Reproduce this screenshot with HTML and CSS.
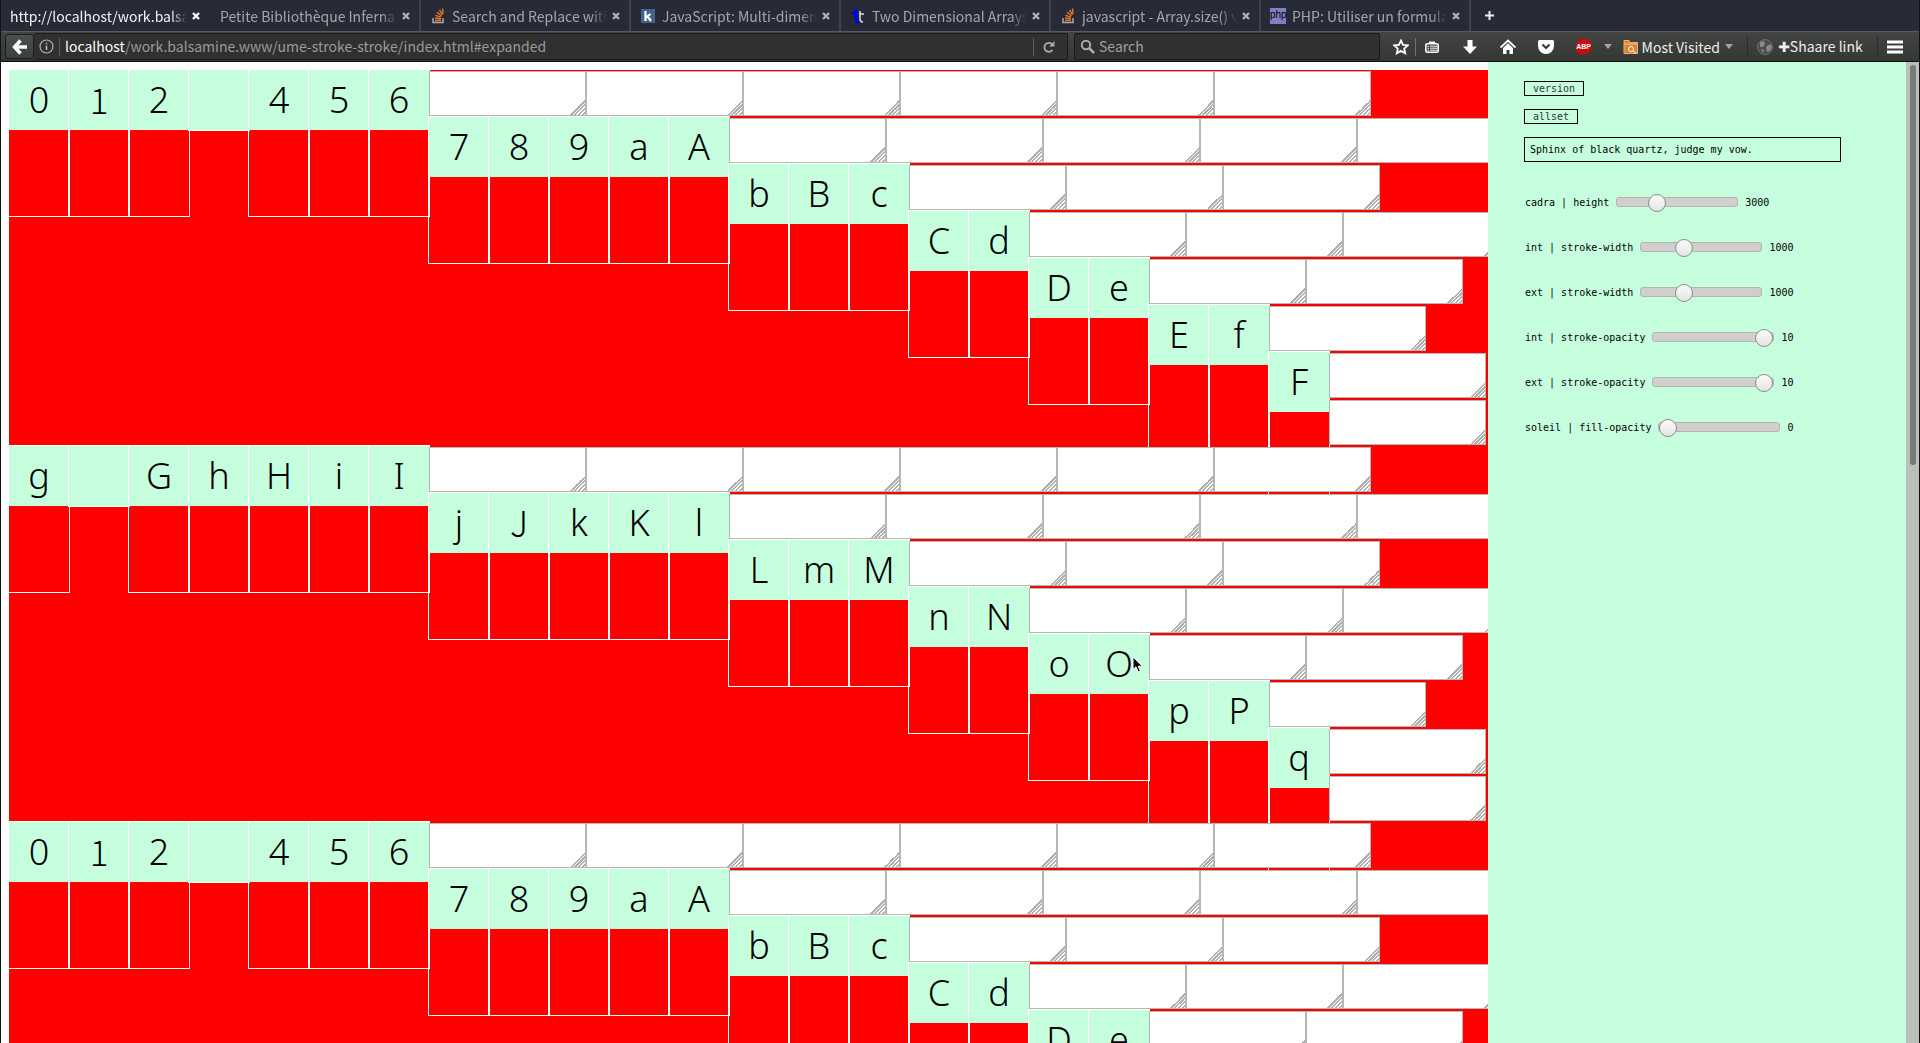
FILE: index.html
```html
<!DOCTYPE html>
<html lang="fr">
<head>
<meta charset="utf-8">
<title>ume-stroke-stroke</title>
<link rel="stylesheet" href="styles.css">
</head>
<body>
<nav class="tabs">
  <div class="tab active"><a href="#t1">http://localhost/work.balsam</a><button class="close" aria-label="Close tab"><svg width="8" height="8" viewBox="0 0 8 8"><path d="M1 1l6 6M7 1l-6 6"/></svg></button></div>
  <div class="tab"><a href="#t2">Petite Bibliothèque Infernal</a><button class="close" aria-label="Close tab"><svg width="8" height="8" viewBox="0 0 8 8"><path d="M1 1l6 6M7 1l-6 6"/></svg></button></div>
  <div class="tab"><svg class="fav" width="16" height="16" viewBox="0 0 16 16"><path d="M3 10v4.500h10V10" fill="none" stroke="#aaa" stroke-width="1.500"/><path d="M5 12.500h6M5 10l6 .8M5.500 7.300l5.500 1.800M7 4.300l4.500 3.400M9.500 2l3 4.600M12.500 .5l.6 5" stroke="#e87922" stroke-width="1.400"/></svg><a href="#t3">Search and Replace with</a><button class="close" aria-label="Close tab"><svg width="8" height="8" viewBox="0 0 8 8"><path d="M1 1l6 6M7 1l-6 6"/></svg></button></div>
  <div class="tab"><svg class="fav" width="16" height="16" viewBox="0 0 16 16"><rect x="1" y="1" width="14" height="14" fill="#45618f"/><path d="M5.500 3v10M10.500 6L6 9.500M7.500 8.500L11 13" stroke="#fff" stroke-width="2.200" fill="none"/></svg><a href="#t4">JavaScript: Multi-dimens</a><button class="close" aria-label="Close tab"><svg width="8" height="8" viewBox="0 0 8 8"><path d="M1 1l6 6M7 1l-6 6"/></svg></button></div>
  <div class="tab"><svg class="fav" width="16" height="16" viewBox="0 0 16 16"><path d="M6 1v10q0 3.500 3 3.500M2 5.500h6" stroke="#0000e0" stroke-width="3" fill="none"/><path d="M10 3v8q0 3 3 3M9 6h5" stroke="#ddd" stroke-width="1.500" fill="none"/></svg><a href="#t5">Two Dimensional Arrays</a><button class="close" aria-label="Close tab"><svg width="8" height="8" viewBox="0 0 8 8"><path d="M1 1l6 6M7 1l-6 6"/></svg></button></div>
  <div class="tab"><svg class="fav" width="16" height="16" viewBox="0 0 16 16"><path d="M3 10v4.500h10V10" fill="none" stroke="#aaa" stroke-width="1.500"/><path d="M5 12.500h6M5 10l6 .8M5.500 7.300l5.500 1.800M7 4.300l4.500 3.400M9.500 2l3 4.600M12.500 .5l.6 5" stroke="#e87922" stroke-width="1.400"/></svg><a href="#t6">javascript - Array.size() v</a><button class="close" aria-label="Close tab"><svg width="8" height="8" viewBox="0 0 8 8"><path d="M1 1l6 6M7 1l-6 6"/></svg></button></div>
  <div class="tab"><span class="fav php">php</span><a href="#t7">PHP: Utiliser un formula</a><button class="close" aria-label="Close tab"><svg width="8" height="8" viewBox="0 0 8 8"><path d="M1 1l6 6M7 1l-6 6"/></svg></button></div>
  <button class="newtab" aria-label="New tab"><svg width="9" height="9" viewBox="0 0 9 9"><path d="M4.500 0v9M0 4.500h9" stroke="#eee" stroke-width="2"/></svg></button>
</nav>

<header class="toolbar">
  <button class="back" aria-label="Back"><svg width="16" height="16" viewBox="0 0 16 16"><path d="M8.500 1.500L2.500 8l6 6.500M3 8h12" fill="none" stroke="#fff" stroke-width="3.400"/></svg></button>
  <div class="urlbar">
    <svg width="15" height="15" viewBox="0 0 15 15"><circle cx="7.500" cy="7.500" r="6.500" fill="none" stroke="#b5b5b5" stroke-width="1.200"/><path d="M7.500 6.500v4.500M7.500 3.800v1.500" stroke="#b5b5b5" stroke-width="1.600"/></svg>
    <span class="vline"></span>
    <p class="url"><b>localhost</b>/work.balsamine.www/ume-stroke-stroke/index.html#expanded</p>
    <span class="vline"></span>
    <button class="reload" aria-label="Reload"><svg width="12" height="12" viewBox="0 0 12 12"><path d="M9.500 9A4.500 4.500 0 1 1 9 3" fill="none" stroke="#a3abb3" stroke-width="1.800"/><path d="M11.500 0v5.500H6z" fill="#a3abb3"/></svg></button>
  </div>
  <div class="search">
    <svg width="15" height="15" viewBox="0 0 15 15"><circle cx="6" cy="6" r="4.200" fill="none" stroke="#aaa" stroke-width="2"/><path d="M9 9l5 5" stroke="#aaa" stroke-width="2.500"/></svg>
    <input type="text" placeholder="Search" aria-label="Search">
  </div>
  <div class="tools">
    <button aria-label="Bookmark"><svg width="16" height="16" viewBox="0 0 16 16"><path d="M8 1.500l2 4.400 4.800.5-3.600 3.200 1 4.700L8 11.900l-4.200 2.400 1-4.700L1.200 6.400 6 5.900z" fill="none" stroke="#fff" stroke-width="1.800"/></svg></button>
    <span class="split"></span>
    <button aria-label="Bookmarks list"><svg width="16" height="16" viewBox="0 0 16 16"><path d="M5 3.500h6" stroke="#fff" stroke-width="2"/><rect x="1.800" y="4.800" width="12.400" height="8.400" rx="1.500" fill="none" stroke="#fff" stroke-width="1.600"/><path d="M3.500 7.200h1.500M6 7.200h7M3.500 9.200h1.500M6 9.200h7M3.500 11.200h1.500M6 11.200h7" stroke="#fff"/></svg></button>
    <button aria-label="Downloads"><svg width="16" height="16" viewBox="0 0 16 16"><path d="M5.500 1h5v6.500H15L8 15 1 7.500h4.500z" fill="#fff"/></svg></button>
    <button aria-label="Home"><svg width="16" height="16" viewBox="0 0 16 16"><path d="M.5 8.500L8 1.500l7.500 7" fill="none" stroke="#fff" stroke-width="1.800"/><path d="M3 9l5-4.700L13 9v6H9.500v-4h-3v4H3z" fill="#fff"/></svg></button>
    <button aria-label="Pocket"><svg width="16" height="16" viewBox="0 0 16 16"><path d="M1.500 1h13Q16 1 16 2.500V7A8 8 0 0 1 0 7V2.500Q0 1 1.500 1z" fill="#fff"/><path d="M4.500 5.500L8 9l3.500-3.500" fill="none" stroke="#3a3c3a" stroke-width="2.200"/></svg></button>
    <button class="abp" aria-label="Adblock">ABP</button>
    <svg class="caret" width="8" height="5" viewBox="0 0 8 5"><path d="M0 0h8L4 5z" fill="#a5a5a5"/></svg>
    <a class="bm" href="#visited"><svg width="16" height="16" viewBox="0 0 16 16"><path d="M1 14.500v-13h5l1 2h7.500v11z" fill="#d9822f" stroke="#f3b26c"/><path d="M1 5h14" stroke="#f7c58e"/><circle cx="8" cy="10" r="2.500" fill="none" stroke="#fff"/><path d="M10 12l3 2" stroke="#fff"/></svg>Most Visited<svg width="8" height="5" viewBox="0 0 8 5"><path d="M0 0h8L4 5z" fill="#a5a5a5"/></svg></a>
    <span class="groove"></span>
    <a class="shaare" href="#shaare"><svg width="16" height="16" viewBox="0 0 16 16"><circle cx="8" cy="8" r="7.500" fill="#4d4e4d" stroke="#6d6e6d"/><path d="M3 3l4-1 1 3-2 3-3 0zM9 8l4-3 2 3-2 4-3 1zM4 10l3 1-1 3z" fill="#8a8b8a"/></svg><span><b>✚</b>Shaare link</span></a>
    <span class="groove"></span>
    <button aria-label="Menu"><svg width="16" height="16" viewBox="0 0 16 16"><path d="M0 3h16M0 8h16M0 13h16" stroke="#fff" stroke-width="3"/></svg></button>
  </div>
</header>

<main class="page">
  <div class="canvas">
    <div class="sheet">
      <section class="set">
        <div class="row s0"><i><b>0</b></i><i><b class="alt">1</b></i><i><b>2</b></i><i class="empty"><b></b></i><i><b>4</b></i><i><b>5</b></i><i><b>6</b></i><textarea aria-label="path"></textarea><textarea aria-label="path"></textarea><textarea aria-label="path"></textarea><textarea aria-label="path"></textarea><textarea aria-label="path"></textarea><textarea aria-label="path"></textarea></div>
        <div class="row s7"><i><b>7</b></i><i><b>8</b></i><i><b>9</b></i><i><b>a</b></i><i><b>A</b></i><textarea aria-label="path"></textarea><textarea aria-label="path"></textarea><textarea aria-label="path"></textarea><textarea aria-label="path"></textarea><textarea aria-label="path"></textarea></div>
        <div class="row s12"><i><b>b</b></i><i><b>B</b></i><i><b>c</b></i><textarea aria-label="path"></textarea><textarea aria-label="path"></textarea><textarea aria-label="path"></textarea></div>
        <div class="row s15"><i><b>C</b></i><i><b>d</b></i><textarea aria-label="path"></textarea><textarea aria-label="path"></textarea><textarea aria-label="path"></textarea></div>
        <div class="row s17"><i><b>D</b></i><i><b>e</b></i><textarea aria-label="path"></textarea><textarea aria-label="path"></textarea></div>
        <div class="row s19"><i><b>E</b></i><i><b>f</b></i><textarea aria-label="path"></textarea></div>
        <div class="row s21"><i><b>F</b></i><textarea aria-label="path"></textarea></div>
        <div class="row s22"><textarea aria-label="path"></textarea></div>
      </section>
      <section class="set">
        <div class="row s0"><i><b>g</b></i><i class="empty"><b></b></i><i><b>G</b></i><i><b>h</b></i><i><b>H</b></i><i><b>i</b></i><i><b>I</b></i><textarea aria-label="path"></textarea><textarea aria-label="path"></textarea><textarea aria-label="path"></textarea><textarea aria-label="path"></textarea><textarea aria-label="path"></textarea><textarea aria-label="path"></textarea></div>
        <div class="row s7"><i><b>j</b></i><i><b class="alt">J</b></i><i><b>k</b></i><i><b>K</b></i><i><b>l</b></i><textarea aria-label="path"></textarea><textarea aria-label="path"></textarea><textarea aria-label="path"></textarea><textarea aria-label="path"></textarea><textarea aria-label="path"></textarea></div>
        <div class="row s12"><i><b>L</b></i><i><b>m</b></i><i><b>M</b></i><textarea aria-label="path"></textarea><textarea aria-label="path"></textarea><textarea aria-label="path"></textarea></div>
        <div class="row s15"><i><b>n</b></i><i><b>N</b></i><textarea aria-label="path"></textarea><textarea aria-label="path"></textarea><textarea aria-label="path"></textarea></div>
        <div class="row s17"><i><b>o</b></i><i><b>O</b></i><textarea aria-label="path"></textarea><textarea aria-label="path"></textarea></div>
        <div class="row s19"><i><b>p</b></i><i><b>P</b></i><textarea aria-label="path"></textarea></div>
        <div class="row s21"><i><b>q</b></i><textarea aria-label="path"></textarea></div>
        <div class="row s22"><textarea aria-label="path"></textarea></div>
      </section>
      <section class="set">
        <div class="row s0"><i><b>0</b></i><i><b class="alt">1</b></i><i><b>2</b></i><i class="empty"><b></b></i><i><b>4</b></i><i><b>5</b></i><i><b>6</b></i><textarea aria-label="path"></textarea><textarea aria-label="path"></textarea><textarea aria-label="path"></textarea><textarea aria-label="path"></textarea><textarea aria-label="path"></textarea><textarea aria-label="path"></textarea></div>
        <div class="row s7"><i><b>7</b></i><i><b>8</b></i><i><b>9</b></i><i><b>a</b></i><i><b>A</b></i><textarea aria-label="path"></textarea><textarea aria-label="path"></textarea><textarea aria-label="path"></textarea><textarea aria-label="path"></textarea><textarea aria-label="path"></textarea></div>
        <div class="row s12"><i><b>b</b></i><i><b>B</b></i><i><b>c</b></i><textarea aria-label="path"></textarea><textarea aria-label="path"></textarea><textarea aria-label="path"></textarea></div>
        <div class="row s15"><i><b>C</b></i><i><b>d</b></i><textarea aria-label="path"></textarea><textarea aria-label="path"></textarea><textarea aria-label="path"></textarea></div>
        <div class="row s17"><i><b>D</b></i><i><b>e</b></i><textarea aria-label="path"></textarea><textarea aria-label="path"></textarea></div>
      </section>
    </div>
  </div>

  <aside class="panel">
    <button class="opt">version</button>
    <button class="opt">allset</button>
    <input class="phrase" type="text" value="Sphinx of black quartz, judge my vow." aria-label="Phrase">
    <div class="sliders">
      <div class="ctl"><label for="r1">cadra | height</label><input id="r1" type="range" min="0" max="100" value="30"><output for="r1">3000</output></div>
      <div class="ctl"><label for="r2">int | stroke-width</label><input id="r2" type="range" min="0" max="100" value="33"><output for="r2">1000</output></div>
      <div class="ctl"><label for="r3">ext | stroke-width</label><input id="r3" type="range" min="0" max="100" value="33"><output for="r3">1000</output></div>
      <div class="ctl"><label for="r4">int | stroke-opacity</label><input id="r4" type="range" min="0" max="10" value="10"><output for="r4">10</output></div>
      <div class="ctl"><label for="r5">ext | stroke-opacity</label><input id="r5" type="range" min="0" max="10" value="10"><output for="r5">10</output></div>
      <div class="ctl"><label for="r6">soleil | fill-opacity</label><input id="r6" type="range" min="0" max="10" value="0"><output for="r6">0</output></div>
    </div>
  </aside>
  <div class="scroll"><span></span></div>
</main>
<svg class="pointer" width="12" height="18" viewBox="0 0 12 18"><path d="M1 1v12.500l3-2.700 2.200 5.200 2.200-1-2.200-4.800h4.300z" fill="#000" stroke="#fff" stroke-width="1"/></svg>
</body>
</html>
```
FILE: styles.css
```css
* { box-sizing: border-box; }
body {
  margin: 0;
  height: 100vh;
  display: flex;
  flex-direction: column;
  overflow: hidden;
  background: #fff;
  border: 0 solid #111;
  border-width: 0 1px;
  font: 14px/20px "Noto Sans CJK JP", "Noto Sans", sans-serif;
}
button {
  padding: 0;
  border: 0;
  background: none;
  font: inherit;
  color: inherit;
  display: flex;
  align-items: center;
  justify-content: center;
}
a { color: inherit; text-decoration: none; }
svg { flex: none; }

/* tabs */
.tabs {
  flex: none;
  height: 31px;
  display: flex;
  background: #272b37;
  color: #a6a6a6;
}
.tab {
  flex: 0 1 210px;
  min-width: 0;
  display: flex;
  align-items: center;
  gap: 4px;
  padding: 0 8px 0 9px;
  border-right: 2px solid #40424c;
}
.tab.active { color: #f2f2f2; border-color: transparent; }
.tab a {
  flex: 1;
  min-width: 0;
  overflow: hidden;
  white-space: nowrap;
  -webkit-mask-image: linear-gradient(to left, transparent, #000 16px);
  mask-image: linear-gradient(to left, transparent, #000 16px);
}
.fav { flex: none; width: 16px; margin-right: 2px; }
.php {
  height: 16px;
  background: #8080c0;
  color: #000;
  font: 10px/14px "Liberation Sans", sans-serif;
}
.close { width: 10px; }
.close path { stroke: #b0b0b0; stroke-width: 2.4; fill: none; }
.active .close path { stroke: #fff; }
.newtab { width: 36px; }

/* toolbar */
.toolbar {
  flex: none;
  height: 31px;
  display: flex;
  align-items: center;
  padding: 0 13px 0 4px;
  border-top: 1px solid #5a5c5a;
  border-bottom: 1px solid #0c0c0c;
  background: linear-gradient(#434543, #353735);
  color: #eee;
  line-height: 18px;
}
.back {
  width: 29px;
  height: 25px;
  border: 1px solid #1c1c1c;
  border-radius: 3px;
  background: linear-gradient(#4c504c, #3c403c);
}
.urlbar, .search {
  height: 27px;
  display: flex;
  align-items: center;
  background: #303031;
  border: 1px solid #1a1a1a;
  border-radius: 2px;
}
.urlbar { flex: 1 1 1034px; padding: 0 8px 0 5px; gap: 5px; border-left: 0; }
.vline { width: 1px; height: 18px; background: #5c5c60; }
.url { flex: 1; margin: 0; padding-bottom: 2px; color: #9a9a9a; white-space: nowrap; }
.url b { font-weight: 400; color: #fff; }
.reload { width: 20px; }
.search { flex: 0 1 306px; margin-left: 6px; padding: 0 5px; gap: 4px; }
.search input {
  flex: 1;
  min-width: 0;
  padding: 0 0 2px;
  border: 0;
  background: none;
  font: inherit;
  color: #fff;
}
.search input::placeholder { color: #a0a0a0; }
.tools { flex: none; width: 526px; display: flex; align-items: center; padding: 0 3px 0 13px; }
.tools > button { flex: none; width: 16px; margin-right: 22px; }
.tools > button:first-child { margin-right: 6px; }
.split { width: 2px; height: 18px; margin-right: 8px; background: #6e706e; }
.tools > .abp {
  height: 16px;
  background: #c70d0d;
  clip-path: polygon(30% 0, 70% 0, 100% 30%, 100% 70%, 70% 100%, 30% 100%, 0 70%, 0 30%);
  font: bold 7px/16px "Liberation Sans", sans-serif;
  color: #fff;
  margin-right: 12px;
}
.bm { display: flex; align-items: center; gap: 3px; margin-left: 11px; white-space: nowrap; }
.bm svg:last-child { margin-left: 2px; }
.groove { width: 1px; height: 22px; margin: 0 10px 0 14px; background: #2a2b2a; }
.shaare { display: flex; align-items: center; gap: 5px; white-space: nowrap; }
.shaare b { font: 14px/18px "DejaVu Sans", sans-serif; }
.tools > button:last-child { margin: 0 0 0 auto; }

/* page */
.page { flex: 1; min-height: 0; display: flex; }
.canvas { flex: 1; min-width: 0; padding: 8px 0 0 8px; overflow: hidden; }
.sheet, .set { display: flex; flex-direction: column; }
.sheet { background: #f00; }
.row { height: 47px; display: flex; align-items: flex-start; }
.row i {
  flex: 0 0 60px;
  height: 146px;
  box-shadow: 0 0 0 1px #fff;
  font-style: normal;
}
.row .empty { height: 60px; }
.row b {
  display: block;
  height: 60px;
  background: #c6ffde;
  font: 350 36px/60px "Noto Sans", sans-serif;
  text-align: center;
}
.row .alt { font: 300 35px/58px "Noto Sans CJK JP", sans-serif; }
.s7 { padding-left: 420px; }
.s12 { padding-left: 720px; }
.s15 { padding-left: 900px; }
.s17 { padding-left: 1020px; }
.s19 { padding-left: 1140px; }
.s21 { padding-left: 1260px; }
.s22 { padding-left: 1320px; }
textarea {
  flex: 0 0 157px;
  height: 45px;
  margin: 1px 0 0;
  border: 1px solid #b6b6b3;
  border-radius: 0;
  resize: none;
  background: linear-gradient(135deg, transparent 50%, #b0b0b0 50% 57%, #fff 57% 63%, #b0b0b0 63% 70%, #fff 70% 76%, #b0b0b0 76% 83%, #fff 83% 89%, #b0b0b0 89% 95%, #fff 95%) right bottom / 15px 15px no-repeat #fff;
}

/* panel */
.panel {
  flex: 0 0 418px;
  display: flex;
  flex-direction: column;
  align-items: flex-start;
  padding: 19px 36px;
  background: #c6ffde;
  font: 10px/13px "DejaVu Sans Mono", monospace;
}
.opt {
  height: 15px;
  padding: 0 8px;
  border: 1px solid #000;
  margin-bottom: 13px;
  color: #333;
}
.phrase {
  width: 317px;
  height: 25px;
  padding: 0 5px;
  border: 1px solid #000;
  background: none;
  font: inherit;
}
.sliders { display: flex; flex-direction: column; gap: 27px; padding: 31px 0 0 1px; }
.ctl { height: 18px; display: flex; align-items: center; gap: 7px; }
input[type="range"] {
  -webkit-appearance: none;
  appearance: none;
  width: 122px;
  height: 18px;
  margin: 0;
  background: none;
}
input[type="range"]::-webkit-slider-runnable-track {
  height: 10px;
  border: 1px solid #b4b4b2;
  border-radius: 3px;
  background: #d0cfce;
}
input[type="range"]::-webkit-slider-thumb {
  -webkit-appearance: none;
  width: 18px;
  height: 18px;
  margin-top: -4px;
  border: 1px solid #8c8c88;
  border-radius: 50%;
  background: linear-gradient(#fbfbfb, #e4e4e4);
}
.scroll { flex: 0 0 13px; padding: 3px; background: #bcbebc; }
.scroll span { display: block; height: 41%; margin-left: 1px; border-radius: 3px; background: #757b78; }
.pointer { position: absolute; left: 59%; top: 656px; margin-left: -1px; }
```
